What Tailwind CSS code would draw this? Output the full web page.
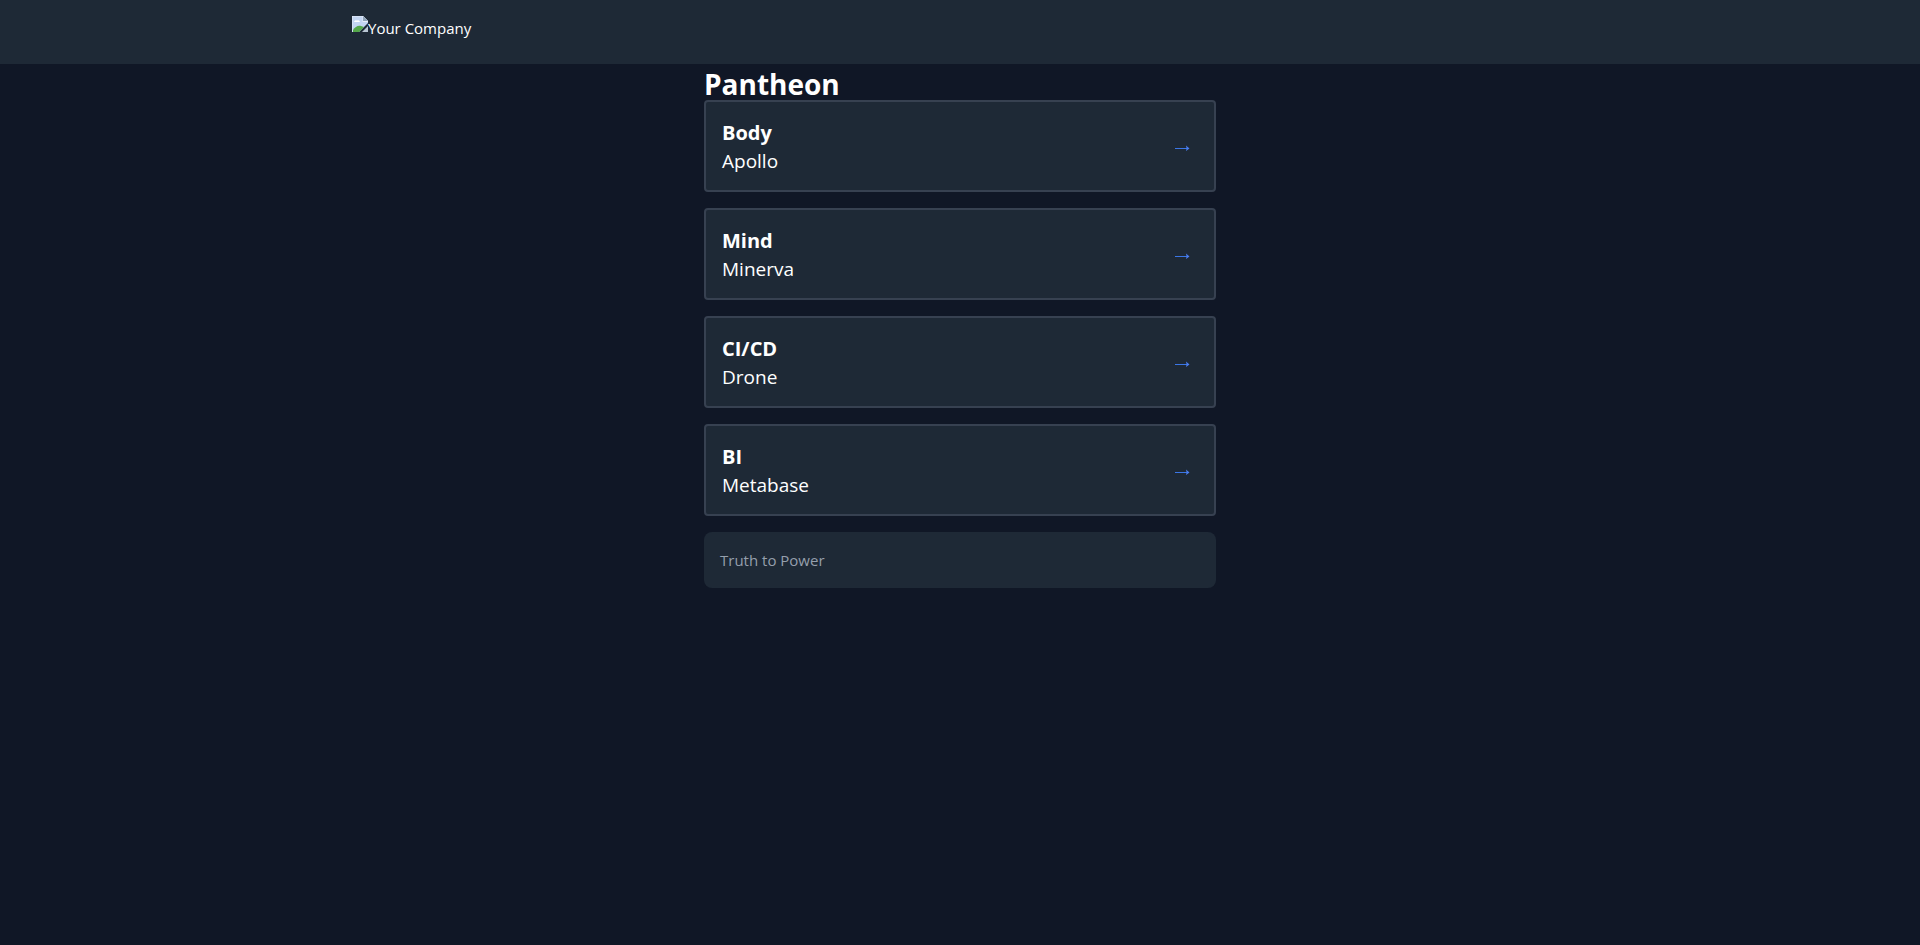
<!DOCTYPE html>
<html lang="en">
<head>
  <meta charset="UTF-8" />
  <meta name="viewport" content="width=device-width, initial-scale=1.0" />
  <title>Pantheon</title>
  <script src="https://cdn.jsdelivr.net/npm/@tailwindcss/browser@4"></script>
</head>
<body class="min-h-screen bg-[#101726] text-white font-['Segoe_UI','Open_Sans',sans-serif]">

  <!-- Top bar -->
  <nav class="bg-[#1e2936]">
    <div class="mx-auto flex h-16 max-w-7xl items-start px-8 py-4">
      <a href="#" class="flex items-start">
        <svg class="size-4 shrink-0" viewBox="0 0 16 16" aria-hidden="true">
          <path d="M0 0h11l5 5v2L7 16H0z" fill="#c3d5f2" />
          <path d="M0 0h11l5 5v1h-5.500V.500H.500V16H0z" fill="#e8eef8" />
          <path d="M11 0v5h5z" fill="#8fa3b8" />
          <path d="M2 6a2 2 0 0 1 3-1.500A2 2 0 0 1 8 6z" fill="#fff" />
          <path d="M1 16v-2c2-3 5-5 8-4l3 1-5 5z" fill="#55a84a" />
          <path d="M16 10v6h-6z" fill="#b9c6d4" />
        </svg>
        <span class="text-[15px] leading-6">Your Company</span>
      </a>
    </div>
  </nav>

  <main class="mx-auto max-w-lg">
    <h1 class="pt-1 text-[28px] leading-8 font-bold">Pantheon</h1>

    <!-- Services -->
    <div class="space-y-4">
      <a href="#" class="flex items-center justify-between rounded border-2 border-[#374151] bg-[#1e2936] px-4 pt-[17px] pb-[15px]">
        <div>
          <h2 class="text-xl font-bold">Body</h2>
          <p class="text-[19px] leading-7">Apollo</p>
        </div>
        <svg class="mr-2 h-2 w-4" viewBox="0 0 16 8" fill="none" aria-hidden="true">
          <path d="M1 5.500h13" stroke="#3b76e6" />
          <path d="M12 2.500 15.500 5.500 12 8l.6-2.500z" fill="#4a7df0" />
        </svg>
      </a>
      <a href="#" class="flex items-center justify-between rounded border-2 border-[#374151] bg-[#1e2936] px-4 pt-[17px] pb-[15px]">
        <div>
          <h2 class="text-xl font-bold">Mind</h2>
          <p class="text-[19px] leading-7">Minerva</p>
        </div>
        <svg class="mr-2 h-2 w-4" viewBox="0 0 16 8" fill="none" aria-hidden="true">
          <path d="M1 5.500h13" stroke="#3b76e6" />
          <path d="M12 2.500 15.500 5.500 12 8l.6-2.500z" fill="#4a7df0" />
        </svg>
      </a>
      <a href="#" class="flex items-center justify-between rounded border-2 border-[#374151] bg-[#1e2936] px-4 pt-[17px] pb-[15px]">
        <div>
          <h2 class="text-xl font-bold">CI/CD</h2>
          <p class="text-[19px] leading-7">Drone</p>
        </div>
        <svg class="mr-2 h-2 w-4" viewBox="0 0 16 8" fill="none" aria-hidden="true">
          <path d="M1 5.500h13" stroke="#3b76e6" />
          <path d="M12 2.500 15.500 5.500 12 8l.6-2.500z" fill="#4a7df0" />
        </svg>
      </a>
      <a href="#" class="flex items-center justify-between rounded border-2 border-[#374151] bg-[#1e2936] px-4 pt-[17px] pb-[15px]">
        <div>
          <h2 class="text-xl font-bold">BI</h2>
          <p class="text-[19px] leading-7">Metabase</p>
        </div>
        <svg class="mr-2 h-2 w-4" viewBox="0 0 16 8" fill="none" aria-hidden="true">
          <path d="M1 5.500h13" stroke="#3b76e6" />
          <path d="M12 2.500 15.500 5.500 12 8l.6-2.500z" fill="#4a7df0" />
        </svg>
      </a>
    </div>

    <footer class="mt-4 rounded-lg bg-[#1e2936] p-4 text-[15px] leading-6 text-[#959fac]">Truth to Power</footer>
  </main>

</body>
</html>
